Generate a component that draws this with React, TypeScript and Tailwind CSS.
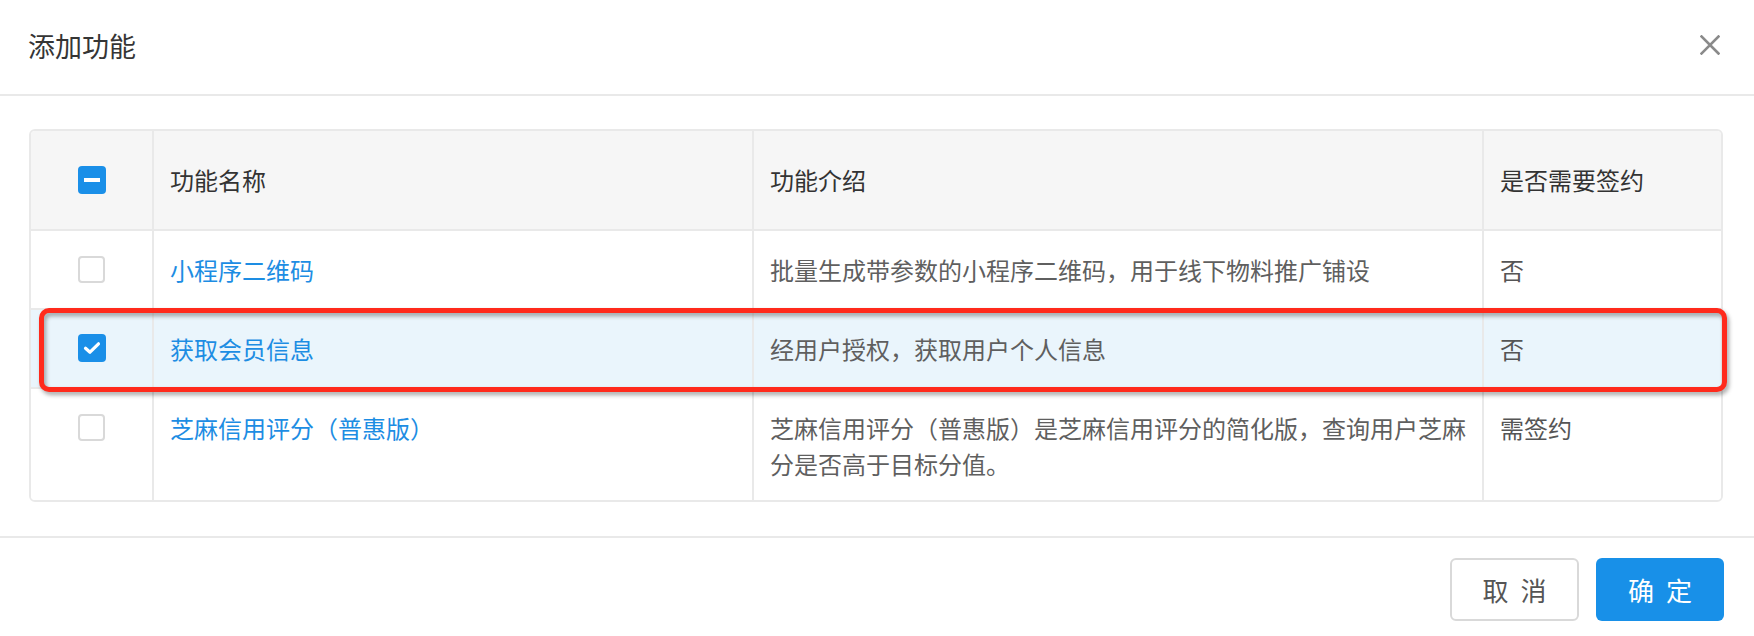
import React from "react";

function Checkbox({ state }: { state: "none" | "checked" | "indeterminate" }) {
  if (state === "none") {
    return <div className="w-[27px] h-[27px] rounded-[4px] border-2 border-[#d9d9d9] bg-white" />;
  }
  return (
    <div className="w-[28px] h-[28px] rounded-[4px] bg-[#1a8fe8] flex items-center justify-center">
      {state === "checked" ? (
        <svg width="18" height="14" viewBox="0 0 18 14">
          <path d="M2.5 7.2 L7 11.2 L15.5 2.8" fill="none" stroke="#fff" strokeWidth="3.2" strokeLinecap="round" strokeLinejoin="round" />
        </svg>
      ) : (
        <div className="w-[16px] h-[4px] bg-white" />
      )}
    </div>
  );
}

const rows = [
  { name: "小程序二维码", desc: ["批量生成带参数的小程序二维码，用于线下物料推广铺设"], sign: "否", state: "none" as const, selected: false },
  { name: "获取会员信息", desc: ["经用户授权，获取用户个人信息"], sign: "否", state: "checked" as const, selected: true },
  { name: "芝麻信用评分（普惠版）", desc: ["芝麻信用评分（普惠版）是芝麻信用评分的简化版，查询用户芝麻", "分是否高于目标分值。"], sign: "需签约", state: "none" as const, selected: false },
];

export default function App() {
  return (
    <div className="relative w-[1754px] h-[636px] bg-white font-['Noto_Sans_CJK_SC','Noto_Sans',sans-serif] overflow-hidden">
      {/* Header */}
      <div className="h-[96px] flex items-center justify-between pl-[28px] pr-[34px] border-b-2 border-[#e9e9e9]">
        <div className="text-[27px] text-[#353535] leading-none pb-[4px]">添加功能</div>
        <svg width="20" height="20" viewBox="0 0 20 20" className="mb-[4px]">
          <path d="M1.5 1.5 L18.5 18.5 M18.5 1.5 L1.5 18.5" stroke="#8a8a8a" strokeWidth="2.6" strokeLinecap="square" />
        </svg>
      </div>

      {/* Body */}
      <div className="pt-[33px] pb-[34px] pl-[29px] pr-[31px]">
        <div className="border-2 border-[#e9e9e9] rounded-[6px] overflow-hidden text-[24px]">
          {/* Header row */}
          <div className="flex h-[100px] bg-[#f6f6f6] border-b-2 border-[#e9e9e9] text-[#333]">
            <div className="w-[123px] border-r-2 border-[#e9e9e9] flex items-center justify-center">
              <Checkbox state="indeterminate" />
            </div>
            <div className="w-[600px] border-r-2 border-[#e9e9e9] flex items-center px-4">功能名称</div>
            <div className="w-[730px] border-r-2 border-[#e9e9e9] flex items-center px-4">功能介绍</div>
            <div className="w-[237px] flex items-center px-4">是否需要签约</div>
          </div>
          {rows.map((r, i) => {
            const last = i === rows.length - 1;
            return (
              <div
                key={i}
                className={`flex leading-[36px] ${!last ? "border-b-2 border-[#e9e9e9]" : ""} ${r.selected ? "bg-[#eaf5fc]" : "bg-white"}`}
              >
                <div className={`w-[123px] border-r-2 border-[#e9e9e9] flex justify-center pt-[20px] ${last ? "pb-[18px]" : "pb-[20px]"}`}>
                  <div className="h-[36px] flex items-center">
                    <Checkbox state={r.state} />
                  </div>
                </div>
                <div className={`w-[600px] border-r-2 border-[#e9e9e9] px-4 pt-[21px] ${last ? "pb-[18px]" : "pb-[20px]"} text-[#1d8de3]`}>{r.name}</div>
                <div className={`w-[730px] border-r-2 border-[#e9e9e9] px-4 pt-[21px] ${last ? "pb-[18px]" : "pb-[20px]"} text-[#5f5f5f]`}>
                  {r.desc.map((d, j) => (
                    <div key={j} className="whitespace-nowrap">{d}</div>
                  ))}
                </div>
                <div className={`w-[237px] px-4 pt-[21px] ${last ? "pb-[18px]" : "pb-[20px]"} text-[#555]`}>{r.sign}</div>
              </div>
            );
          })}
        </div>
      </div>

      {/* Footer */}
      <div className="border-t-2 border-[#e9e9e9] flex justify-end gap-[17px] pt-[20px] pr-[30px]">
        <button className="w-[129px] h-[63px] rounded-[6px] border-2 border-[#d9d9d9] bg-white text-[26px] text-[#555] tracking-[3px] pl-[3px]">
          取 消
        </button>
        <button className="w-[128px] h-[63px] rounded-[6px] bg-[#1890e8] text-[26px] text-white tracking-[3px] pl-[3px]">
          确 定
        </button>
      </div>

      {/* Annotation */}
      <div className="absolute left-[39px] top-[308px] w-[1688px] h-[84px] border-[5px] border-[#ff2a1c] rounded-[10px] drop-shadow-[2px_3px_2px_rgba(0,0,0,0.35)]" />
    </div>
  );
}
